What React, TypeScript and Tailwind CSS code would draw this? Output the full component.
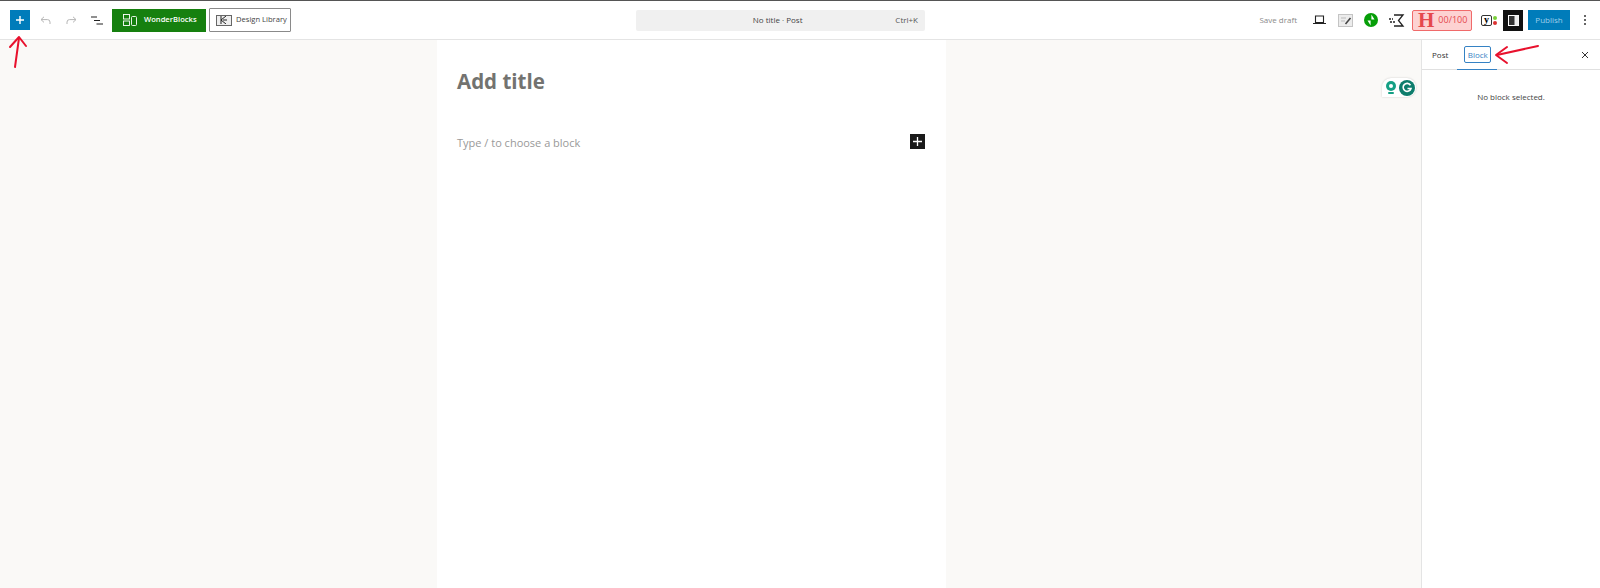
import React from 'react';

const sans = 'font-["Open_Sans",sans-serif]';

const PenArrows = () => (
    <>
        <svg className="absolute left-[6px] top-[34px]" width="26" height="38" viewBox="0 0 26 38" fill="none" stroke="#e8112d" strokeWidth="2" strokeLinecap="round" strokeLinejoin="round">
            <path d="M9 33 L13 4" />
            <path d="M4 13 L13 3 L20 12" />
        </svg>
        <svg className="absolute left-[1490px] top-[40px]" width="54" height="28" viewBox="0 0 54 28" fill="none" stroke="#e8112d" strokeWidth="2" strokeLinecap="round" strokeLinejoin="round">
            <path d="M7 15 L48 6" />
            <path d="M17 7 L6 15 L17 23" />
        </svg>
    </>
);

const GrammarlyBadge = () => (
    <div className="absolute left-[1382px] top-[78px] flex h-[19px] w-[34px] items-center justify-between rounded-t-[9px] rounded-br-[9px] bg-white px-[1px] shadow-[0_0_2px_rgba(0,0,0,0.2)]">
        <svg width="16" height="18" viewBox="0 0 16 18">
            <circle cx="8" cy="7" r="5" fill="#15a085" />
            <circle cx="8" cy="7" r="2" fill="#fff" />
            <rect x="5" y="13" width="6" height="2" rx="1" fill="#15a085" />
        </svg>
        <svg width="16" height="16" viewBox="0 0 16 16">
            <circle cx="8" cy="8" r="8" fill="#0d7d6c" />
            <path d="M11.5 5.2 A4 4 0 1 0 12 8.5 H8.5" fill="none" stroke="#fff" strokeWidth="1.6" />
        </svg>
    </div>
);

const Header = () => (
    <header className={`flex h-[40px] shrink-0 items-center border-t border-b border-t-[#555] border-b-[#e4e4e4] bg-white ${sans}`}>
        <button className="ml-[10px] flex h-[20px] w-[20px] items-center justify-center bg-[#007cba]">
            <svg width="8" height="8" viewBox="0 0 8 8" stroke="#fff" strokeWidth="1.4"><path d="M4 0V8M0 4H8" /></svg>
        </button>
        <svg className="ml-[10px]" width="11" height="9" viewBox="0 0 11 9" fill="none" stroke="#b5b5b5" strokeWidth="1"><path d="M4 0.8 L1 3.6 L4 6.4M1.2 3.6H7.5a2.5 2.5 0 0 1 2.5 2.5V8" /></svg>
        <svg className="ml-[15px]" width="11" height="9" viewBox="0 0 11 9" fill="none" stroke="#b5b5b5" strokeWidth="1"><path d="M7 0.8 L10 3.6 L7 6.4M9.8 3.6H3.5a2.5 2.5 0 0 0 -2.5 2.5V8" /></svg>
        <svg className="ml-[14px]" width="12" height="9" viewBox="0 0 12 9" stroke="#222" strokeWidth="1.1"><path d="M0 1H6M3 4.5H9M5.5 8H12" /></svg>
        <button className="ml-[9px] flex h-[23px] w-[94px] items-center bg-[#16800f] pl-[11px] text-[7.6px] font-semibold text-white">
            <svg className="mr-[7px]" width="14" height="12" viewBox="0 0 14 12" fill="none" stroke="#fff" strokeWidth="0.9"><rect x="0.5" y="0.5" width="6" height="4.5" /><rect x="0.5" y="7" width="6" height="4.5" /><rect x="8.5" y="2.5" width="5" height="9" rx="1" /></svg>
            WonderBlocks
        </button>
        <button className="ml-[3px] flex h-[24px] w-[82px] items-center rounded-[1px] border border-[#8a8a8a] bg-white pl-[6px] text-[7.6px] whitespace-nowrap text-[#444]">
            <span className="mr-[4px] flex h-[11px] w-[16px] shrink-0 items-center justify-center border border-[#666] bg-[#eee]">
                <svg width="8" height="8" viewBox="0 0 8 8" fill="none" stroke="#222" strokeWidth="1"><path d="M1 0V8M1 4L6 0M1 4L6 8M3 4H7" /></svg>
            </span>
            Design Library
        </button>

        <div className="ml-[345px] flex h-[21px] w-[289px] items-center rounded-[2px] bg-[#f0f0f0] pr-[7px] text-[8px] text-[#444]">
            <span className="flex-1 pl-[24px] text-center">No title · Post</span>
            <span className="text-[#555]">Ctrl+K</span>
        </div>

        <div className="ml-auto flex items-center">
            <span className="mr-[16px] text-[8px] text-[#8a8a8a]">Save draft</span>
            <svg className="mr-[12px]" width="13" height="10" viewBox="0 0 13 10" fill="none" stroke="#222" strokeWidth="1.1"><path d="M2.5 1H10.5V7.5H2.5ZM0 8.5H13" /></svg>
            <svg className="mr-[11px]" width="15" height="13" viewBox="0 0 15 13" fill="none"><rect x="0.5" y="0.5" width="14" height="12" fill="#ececec" stroke="#c4c4c4" /><path d="M3 4H8M3 7H7" stroke="#bbb" /><path d="M7.5 10L12.5 4" stroke="#444" strokeWidth="1.6" /></svg>
            <svg className="mr-[11px]" width="14" height="14" viewBox="0 0 14 14"><circle cx="7" cy="7" r="7" fill="#069e08" /><path d="M7.4 1.5V6.5H10.5ZM6.6 12.5V7.5H3.5Z" fill="#fff" /></svg>
            <svg className="mr-[7px]" width="16" height="13" viewBox="0 0 16 13" fill="none" stroke="#222" strokeWidth="1.3"><path d="M5 1H14L9.5 6.5L14 12H5" /><path d="M0 5H4M1 8H7" strokeDasharray="2 1" /></svg>
            <div className="flex h-[21px] w-[60px] items-center rounded-[2px] border border-[#f06a6a] bg-[#fdd2d2] pl-[5px] text-[9px] text-[#e5484d]">
                <span className='mr-[4px] font-["Liberation_Serif",serif] text-[21px] leading-none font-bold'>H</span>
                00/100
            </div>
            <div className="ml-[9px] flex items-center">
                <span className='flex h-[11px] w-[11px] items-center justify-center rounded-[2px] border border-[#333] font-["Liberation_Serif",serif] text-[10px] leading-none font-bold'>y</span>
                <span className="ml-[1px] flex flex-col gap-[1px]">
                    <span className="h-[4px] w-[4px] rounded-full bg-[#7ad03a]" />
                    <span className="h-[4px] w-[4px] rounded-full bg-[#dc3232]" />
                </span>
            </div>
            <button className="ml-[6px] flex h-[21px] w-[20px] items-center justify-center bg-[#111]">
                <svg width="11" height="11" viewBox="0 0 11 11"><rect x="0.5" y="0.5" width="10" height="10" fill="#333" stroke="#fff" /><rect x="6.5" y="0.5" width="4" height="10" fill="#eee" /></svg>
            </button>
            <button className="ml-[5px] h-[20px] w-[42px] bg-[#007cba] text-[8px] text-[#9fd0ea]">Publish</button>
            <svg className="mr-[13px] ml-[13px]" width="4" height="12" viewBox="0 0 4 12" fill="#333"><circle cx="2" cy="2" r="1" /><circle cx="2" cy="6" r="1" /><circle cx="2" cy="10" r="1" /></svg>
        </div>
    </header>
);

const Editor = () => (
    <main className={`ml-[437px] w-[509px] bg-white pt-[27px] pr-[21px] pl-[20px] ${sans}`}>
        <h1 className="text-[20.5px] leading-[28px] font-bold text-[#737370]">Add title</h1>
        <div className="mt-[35px] flex items-center justify-between">
            <span className="pt-[4px] text-[11px] leading-[18px] text-[#999]">Type / to choose a block</span>
            <button className="flex h-[15px] w-[15px] items-center justify-center bg-[#1a1a1a]">
                <svg width="9" height="9" viewBox="0 0 9 9" stroke="#fff" strokeWidth="1.3"><path d="M4.5 0V9M0 4.5H9" /></svg>
            </button>
        </div>
    </main>
);

const Sidebar = () => (
    <aside className={`ml-auto w-[179px] border-l border-[#e4e4e4] bg-white ${sans}`}>
        <div className="relative flex h-[30px] items-center border-b border-[#e0e0e0] text-[8px]">
            <span className="ml-[10px] text-[#333]">Post</span>
            <span className="relative ml-[16px] flex h-[17px] w-[27px] items-center justify-center rounded-[2px] border border-[#3582c4] text-[#3582c4]">Block</span>
            <span className="absolute bottom-[-1px] left-[35px] h-[1.5px] w-[40px] bg-[#3582c4]" />
            <svg className="mr-[11px] ml-auto" width="8" height="8" viewBox="0 0 8 8" stroke="#333" strokeWidth="1"><path d="M1 1L7 7M7 1L1 7" /></svg>
        </div>
        <p className="pt-[21px] text-center text-[8px] leading-[12px] text-[#444]">No block selected.</p>
    </aside>
);

export default function App() {
    return (
        <div className="relative flex h-[588px] w-[1600px] flex-col overflow-hidden bg-[#faf9f7]">
            <Header />
            <div className="flex flex-1">
                <Editor />
                <Sidebar />
            </div>
            <GrammarlyBadge />
            <PenArrows />
        </div>
    );
}
